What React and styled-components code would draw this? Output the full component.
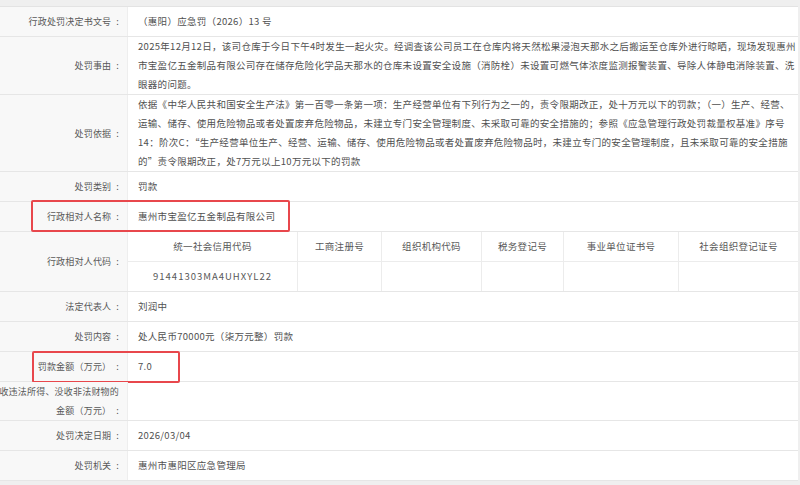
import React from "react";
import styled, { createGlobalStyle } from "styled-components";

const GlobalStyle = createGlobalStyle`
  html, body { margin: 0; padding: 0; background: #efefef; overflow: hidden; }
  body { font-family: "Noto Sans CJK SC", "Noto Sans", sans-serif; }
`;

const Page = styled.div`
  width: 800px;
  height: 485px;
  padding-top: 6px;
  box-sizing: border-box;
`;

const Table = styled.div`
  background: #fff;
  margin-right: 2px;
  border-top: 1px solid #e3e3e3;
  color: #505050;
  line-height: 19px;
`;

const Row = styled.div`
  position: relative;
  display: grid;
  grid-template-columns: 128px 1fr;
  border-bottom: 1px solid #e6e6e6;
`;

const Label = styled.div`
  box-sizing: border-box;
  min-height: 29px;
  background: #f8f8f8;
  border-right: 1px solid #eeeeee;
  padding-right: 8px;
  display: flex;
  flex-direction: column;
  justify-content: center;
  align-items: flex-end;
  font-size: 9px;
  letter-spacing: 0.2px;
  color: #585858;
  white-space: nowrap;
`;

const Colon = styled.span`
  margin-left: 5px;
`;

const Value = styled.div`
  min-height: 29px;
  padding: ${(p) => (p.$flush ? "0" : "0 0 0 10px")};
  display: flex;
  flex-direction: column;
  justify-content: center;
  font-size: 9.5px;
  letter-spacing: 0.3px;
  overflow: hidden;
`;

const Line = styled.span`
  display: block;
  white-space: nowrap;
`;

const CodeGrid = styled.div`
  display: grid;
  grid-template-columns: 170px 84px 100px 82px 115px 1fr;
  grid-template-rows: 30px 29px;
`;

const CodeCell = styled.div`
  box-sizing: border-box;
  display: flex;
  align-items: center;
  justify-content: center;
  white-space: nowrap;
  border-right: ${(p) => (p.$last ? "none" : "1px solid #ececec")};
  border-bottom: ${(p) => (p.$head ? "1px solid #ececec" : "none")};
  font-size: 9.5px;
  letter-spacing: ${(p) => (p.$mono ? "1px" : "0.3px")};
  color: #585858;
`;

const Highlight = styled.div`
  position: absolute;
  left: ${(p) => p.$left}px;
  width: ${(p) => p.$width}px;
  top: ${(p) => p.$top}px;
  height: ${(p) => p.$height}px;
  border: 2px solid #e8474c;
  border-radius: 2px;
  box-sizing: border-box;
  pointer-events: none;
`;

const codeHeads = [
  "统一社会信用代码",
  "工商注册号",
  "组织机构代码",
  "税务登记号",
  "事业单位证书号",
  "社会组织登记证号",
];

function L({ children, lines }) {
  return (
    <Label>
      {lines
        ? lines.map((l, i) => (
            <Line key={i}>
              {l}
              {i === lines.length - 1 && <Colon>:</Colon>}
            </Line>
          ))
        : (
          <Line>
            {children}
            <Colon>:</Colon>
          </Line>
        )}
    </Label>
  );
}

export default function App() {
  return (
    <Page>
      <GlobalStyle />
      <Table>
        <Row>
          <L>行政处罚决定书文号</L>
          <Value>（惠阳）应急罚（2026）13 号</Value>
        </Row>
        <Row>
          <L>处罚事由</L>
          <Value>
            <Line>2025年12月12日，该司仓库于今日下午4时发生一起火灾。经调查该公司员工在仓库内将天然松果浸泡天那水之后搬运至仓库外进行晾晒，现场发现惠州</Line>
            <Line>市宝盈亿五金制品有限公司存在储存危险化学品天那水的仓库未设置安全设施（消防栓）未设置可燃气体浓度监测报警装置、导除人体静电消除装置、洗</Line>
            <Line>眼器的问题。</Line>
          </Value>
        </Row>
        <Row>
          <L>处罚依据</L>
          <Value>
            <Line>依据《中华人民共和国安全生产法》第一百零一条第一项：生产经营单位有下列行为之一的，责令限期改正，处十万元以下的罚款；（一）生产、经营、</Line>
            <Line>运输、储存、使用危险物品或者处置废弃危险物品，未建立专门安全管理制度、未采取可靠的安全措施的；参照《应急管理行政处罚裁量权基准》序号</Line>
            <Line>14：阶次C：“生产经营单位生产、经营、运输、储存、使用危险物品或者处置废弃危险物品时，未建立专门的安全管理制度，且未采取可靠的安全措施</Line>
            <Line>的”责令限期改正，处7万元以上10万元以下的罚款</Line>
          </Value>
        </Row>
        <Row>
          <L>处罚类别</L>
          <Value>罚款</Value>
        </Row>
        <Row>
          <L>行政相对人名称</L>
          <Value>惠州市宝盈亿五金制品有限公司</Value>
          <Highlight $left={31} $width={259} $top={-2} $height={32} />
        </Row>
        <Row>
          <L>行政相对人代码</L>
          <Value $flush>
            <CodeGrid>
              {codeHeads.map((h, i) => (
                <CodeCell key={h} $head $last={i === codeHeads.length - 1}>
                  {h}
                </CodeCell>
              ))}
              {codeHeads.map((h, i) => (
                <CodeCell key={"v" + h} $mono={i === 0} $last={i === codeHeads.length - 1}>
                  {i === 0 ? "91441303MA4UHXYL22" : ""}
                </CodeCell>
              ))}
            </CodeGrid>
          </Value>
        </Row>
        <Row>
          <L>法定代表人</L>
          <Value>刘润中</Value>
        </Row>
        <Row>
          <L>处罚内容</L>
          <Value>处人民币70000元（柒万元整）罚款</Value>
        </Row>
        <Row>
          <L>罚款金额（万元）</L>
          <Value>7.0</Value>
          <Highlight $left={32} $width={148} $top={-1} $height={32} />
        </Row>
        <Row>
          <L lines={["没收违法所得、没收非法财物的", "金额（万元）"]} />
          <Value />
        </Row>
        <Row>
          <L>处罚决定日期</L>
          <Value>2026/03/04</Value>
        </Row>
        <Row>
          <L>处罚机关</L>
          <Value>惠州市惠阳区应急管理局</Value>
        </Row>
      </Table>
    </Page>
  );
}
